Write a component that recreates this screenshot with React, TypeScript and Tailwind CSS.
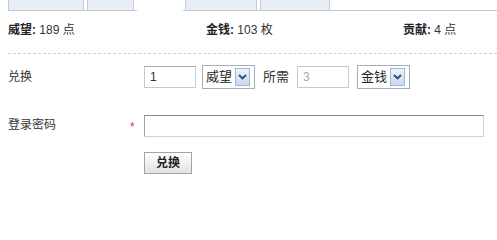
import React from 'react';

const font = { fontFamily: '"Liberation Sans", "Noto Sans CJK SC", sans-serif' };

const Tab = ({ w }: { w: string }) => (
  <div className={`${w} border border-t-0 border-[#c3cbd6] bg-[#e7edf4]`} />
);

const Gap = ({ w, line = true }: { w: string; line?: boolean }) => (
  <div className={`${w} ${line ? 'border-b border-[#c3cbd6]' : ''}`} />
);

const FakeSelect = ({ label }: { label: string }) => (
  <div className="flex h-[24px] w-[53px] items-center justify-between border border-[#a7adb5] bg-white pl-[3px] pr-[4px] text-[13px] text-[#222]">
    <span>{label}</span>
    <span className="flex h-[18px] w-[15px] items-center justify-center border border-[#9fb5d3] bg-gradient-to-b from-[#eef3fa] to-[#c9d8ee]">
      <svg width="9" height="6" viewBox="0 0 9 6">
        <path d="M1 1 L4.5 4.5 L8 1" fill="none" stroke="#2c4a80" strokeWidth="1.8" />
      </svg>
    </span>
  </div>
);

export default function App() {
  return (
    <div className="h-[203px] w-[497px] overflow-hidden bg-white text-[12px] text-[#333]" style={font}>
      {/* tabs */}
      <div className="flex h-[11px]">
        <Gap w="w-[8px]" line={false} />
        <Tab w="w-[76px]" />
        <Gap w="w-[3px]" />
        <Tab w="w-[47px]" />
        <Gap w="w-[3px]" />
        <Gap w="w-[46px]" line={false} />
        <Gap w="w-[2px]" />
        <Tab w="w-[72px]" />
        <Gap w="w-[3px]" />
        <Tab w="w-[70px]" />
        <div className="flex-1 border-b border-[#c3cbd6]" />
      </div>

      {/* stats */}
      <div className="grid grid-cols-[198px_197px_198px] pl-2 pt-[10px] pb-[14px] leading-[18px]">
        <div>
          <b className="text-[#222]">威望:</b> 189 点
        </div>
        <div>
          <b className="text-[#222]">金钱:</b> 103 枚
        </div>
        <div>
          <b className="text-[#222]">贡献:</b> 4 点
        </div>
      </div>

      <div className="ml-2 border-t border-dashed border-[#d0d0d0]" />

      {/* exchange row */}
      <div className="mt-[11px] flex items-center">
        <div className="w-[144px] pl-2">兑换</div>
        <input
          defaultValue="1"
          className="h-[22px] w-[52px] border border-[#c9c9c9] border-t-[#a9a9a9] px-[5px] text-[12px] text-[#333] outline-none"
        />
        <div className="ml-[6px]">
          <FakeSelect label="威望" />
        </div>
        <span className="ml-[8px] text-[13px]">所需</span>
        <input
          defaultValue="3"
          disabled
          className="ml-[8px] h-[22px] w-[52px] border border-[#c9c9c9] bg-white px-[5px] text-[12px] text-[#aaa] outline-none"
        />
        <div className="ml-[8px]">
          <FakeSelect label="金钱" />
        </div>
      </div>

      {/* password row */}
      <div className="mt-[26px] flex items-center">
        <div className="w-[130px] pl-2 pb-[3px]">登录密码</div>
        <span className="w-[14px] pt-[1px] text-[12px] text-[#e33]">*</span>
        <input
          type="password"
          className="h-[22px] w-[340px] border border-[#d4d4d4] border-t-[#8a8a8a] border-l-[#a0a0a0] outline-none"
        />
      </div>

      <div className="mt-[15px] pl-[144px]">
        <button className="h-[22px] w-[48px] border border-[#a3a3a3] bg-gradient-to-b from-white to-[#e2e2e2] text-[12px] font-bold text-[#222]">
          兑换
        </button>
      </div>
    </div>
  );
}
